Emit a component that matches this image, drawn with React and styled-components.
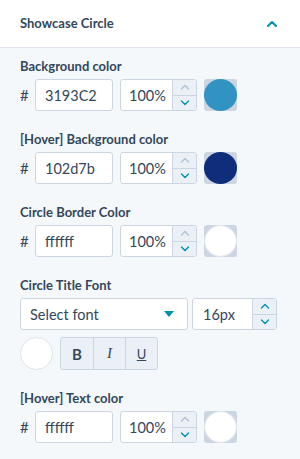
import React from "react";
import styled, { createGlobalStyle } from "styled-components";

const Global = createGlobalStyle`
  html, body { margin: 0; padding: 0; background: #f5f8fa; }
  body { font-family: Lato, "Noto Sans", sans-serif; color: #33475b; }
  * { box-sizing: border-box; }
`;

const Panel = styled.div`
  width: 300px;
  min-height: 459px;
  background: #f5f8fa;
`;

const Header = styled.div`
  height: 48px;
  background: #fff;
  border-bottom: 1px solid #dfe3eb;
  display: flex;
  align-items: center;
  justify-content: space-between;
  padding: 0 20px 0 20px;
`;

const Title = styled.div`
  font-size: 13px;
  font-weight: 700;
  color: #33475b;
  padding-bottom: 1px;
`;

const Body = styled.div`
  padding: 10px 20px 0 20px;
  display: flex;
  flex-direction: column;
  gap: 20px;
`;

const Field = styled.div`
  display: flex;
  flex-direction: column;
  gap: 5px;
`;

const Label = styled.div`
  font-size: 13px;
  line-height: 16px;
  font-weight: 700;
  color: #33475b;
`;

const Row = styled.div`
  display: flex;
  align-items: center;
  gap: ${(p) => p.$gap || 7}px;
`;

const Hash = styled.span`
  width: 8px;
  font-size: 15px;
  color: #33475b;
`;

const TextBox = styled.div`
  width: ${(p) => p.$w}px;
  height: 32px;
  background: #fff;
  border: 1px solid #cbd6e2;
  border-radius: 3px;
  display: flex;
  align-items: center;
  padding-left: 9px;
  font-size: 14.5px;
  color: #33475b;
`;

const Spin = styled.div`
  width: ${(p) => p.$w}px;
  height: 32px;
  background: #fff;
  border: 1px solid #cbd6e2;
  border-radius: 3px;
  display: flex;
  overflow: hidden;
`;

const SpinValue = styled.div`
  flex: 1;
  display: flex;
  align-items: center;
  padding-left: ${(p) => p.$pl || 8}px;
  font-size: 14.5px;
  color: #33475b;
`;

const SpinButtons = styled.div`
  width: 24px;
  border-left: 1px solid #cbd6e2;
  background: #eaf0f6;
  display: flex;
  flex-direction: column;
`;

const SpinBtn = styled.div`
  flex: 1;
  display: flex;
  align-items: center;
  justify-content: center;
  & + & { border-top: 1px solid #cbd6e2; }
`;

const Swatch = styled.div`
  width: 33px;
  height: 32px;
  background: #cbd6e2;
  border-radius: 3px;
  position: relative;
  &::after {
    content: "";
    position: absolute;
    inset: 0;
    border-radius: 50%;
    background: ${(p) => p.$color};
    border: ${(p) => (p.$light ? "1px solid #dfe3eb" : "none")};
  }
`;

const Select = styled.div`
  width: 168px;
  height: 32px;
  background: #fff;
  border: 1px solid #cbd6e2;
  border-radius: 3px;
  display: flex;
  align-items: center;
  justify-content: space-between;
  padding: 0 13px 0 9px;
  font-size: 14.5px;
  color: #33475b;
`;

const Circle = styled.div`
  width: 33px;
  height: 33px;
  border-radius: 50%;
  background: #fff;
  border: 1px solid #dfe3eb;
`;

const BtnGroup = styled.div`
  display: flex;
  border: 1px solid #cbd6e2;
  border-radius: 3px;
  overflow: hidden;
  background: #eaf0f6;
`;

const StyleBtn = styled.div`
  width: 32px;
  height: 31px;
  display: flex;
  align-items: center;
  justify-content: center;
  font-size: 13px;
  color: #33475b;
  & + & { border-left: 1px solid #cbd6e2; }
`;

const Bold = styled.span`
  font-weight: 700;
  font-size: 15px;
`;
const Ital = styled.span`
  font-family: "Liberation Serif", serif;
  font-style: italic;
  font-size: 15px;
`;
const Under = styled.span`
  text-decoration: underline;
  font-size: 13px;
`;

const Chevron = ({ up, color = "#0091ae" }) => (
  <svg width="10" height="6" viewBox="0 0 10 6">
    <path
      d={up ? "M1.5 5 L5 1.5 L8.5 5" : "M1.5 1 L5 4.5 L8.5 1"}
      fill="none"
      stroke={color}
      strokeWidth="1.4"
      strokeLinecap="round"
      strokeLinejoin="round"
    />
  </svg>
);

const Stepper = ({ w, value, upDisabled, pl }) => (
  <Spin $w={w}>
    <SpinValue $pl={pl}>{value}</SpinValue>
    <SpinButtons>
      <SpinBtn>
        <Chevron up color={upDisabled ? "#b0c1d4" : "#0091ae"} />
      </SpinBtn>
      <SpinBtn>
        <Chevron color="#0091ae" />
      </SpinBtn>
    </SpinButtons>
  </Spin>
);

const ColorField = ({ label, hex, color, light }) => (
  <Field>
    <Label>{label}</Label>
    <Row>
      <Hash>#</Hash>
      <TextBox $w={78}>{hex}</TextBox>
      <Stepper w={77} value="100%" upDisabled />
      <Swatch $color={color} $light={light} />
    </Row>
  </Field>
);

export default function App() {
  return (
    <Panel>
      <Global />
      <Header>
        <Title>Showcase Circle</Title>
        <svg width="12" height="8" viewBox="0 0 12 8" style={{ marginRight: 2 }}>
          <path d="M2 6 L6 2 L10 6" fill="none" stroke="#0091ae" strokeWidth="2" strokeLinecap="round" strokeLinejoin="round" />
        </svg>
      </Header>
      <Body>
        <ColorField label="Background color" hex="3193C2" color="#3193c2" />
        <ColorField label="[Hover] Background color" hex="102d7b" color="#102d7b" />
        <ColorField label="Circle Border Color" hex="ffffff" color="#ffffff" light />
        <Field>
          <Label>Circle Title Font</Label>
          <Row $gap={4}>
            <Select>
              <span>Select font</span>
              <svg width="10" height="6" viewBox="0 0 10 6">
                <path d="M0 0 L10 0 L5 6 Z" fill="#0091ae" />
              </svg>
            </Select>
            <Stepper w={85} value="16px" pl={10} />
          </Row>
          <Row $gap={7} style={{ marginTop: 2 }}>
            <Circle />
            <BtnGroup>
              <StyleBtn><Bold>B</Bold></StyleBtn>
              <StyleBtn><Ital>I</Ital></StyleBtn>
              <StyleBtn><Under>U</Under></StyleBtn>
            </BtnGroup>
          </Row>
        </Field>
        <ColorField label="[Hover] Text color" hex="ffffff" color="#ffffff" light />
      </Body>
    </Panel>
  );
}
